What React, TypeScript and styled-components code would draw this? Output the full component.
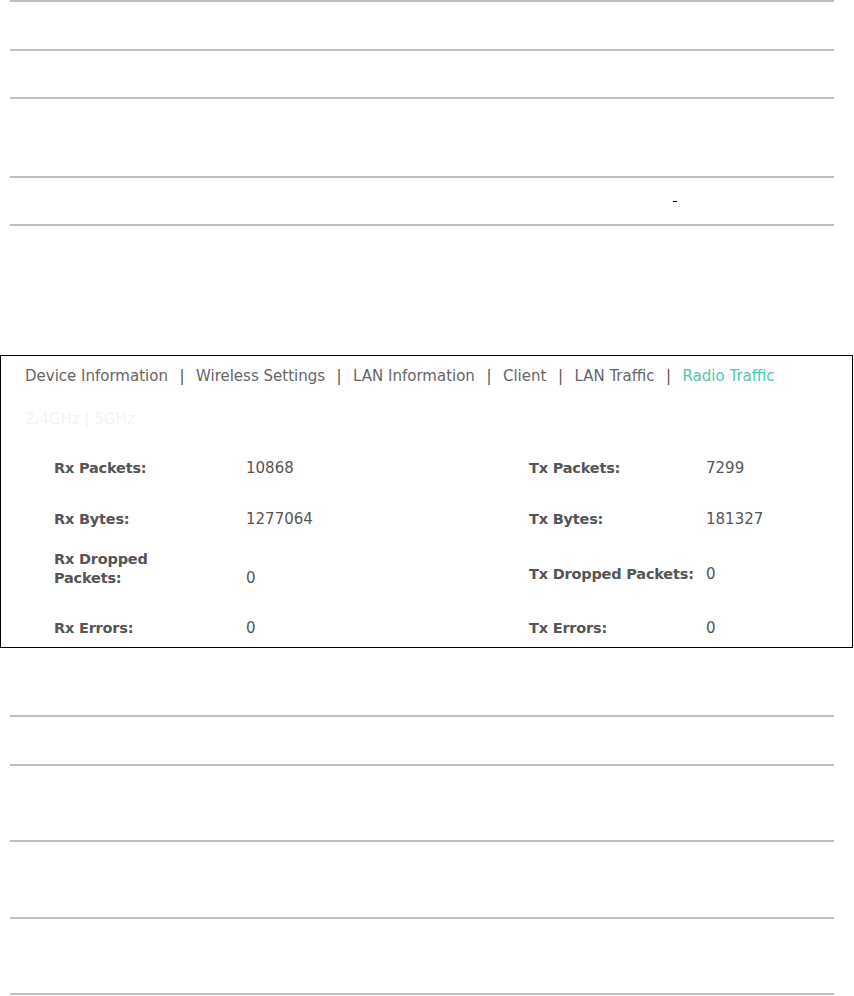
import styled, { createGlobalStyle } from 'styled-components';

const GlobalStyle = createGlobalStyle`
  html, body {
    margin: 0;
    padding: 0;
    background: #ffffff;
  }
  body {
    font-family: 'DejaVu Sans', Verdana, sans-serif;
  }
`;

const Page = styled.div`
  width: 854px;
  display: flex;
  flex-direction: column;
`;

const RuleList = styled.div<{ $top?: number }>`
  margin: ${(p) => p.$top ?? 0}px 20px 0 10px;
  border-top: 2px solid #c0c0c0;
  display: flex;
  flex-direction: column;
`;

const RuleRow = styled.div<{ $h: number }>`
  height: ${(p) => p.$h}px;
  border-bottom: 2px solid #c0c0c0;
  display: flex;
  align-items: center;
`;

const Tick = styled.span`
  display: block;
  width: 4px;
  height: 1px;
  background: #000;
  margin: 0 0 0 663px;
`;

const Panel = styled.section`
  margin-top: 129px;
  width: 851px;
  height: 291px;
  border: 1px solid #000;
  display: flex;
  flex-direction: column;
  font-size: 15px;
  line-height: 19px;
  color: #555;
`;

const Nav = styled.nav`
  display: flex;
  padding: 11px 0 0 24px;
  color: #666;
  white-space: nowrap;
`;

const NavItem = styled.span<{ $active?: boolean }>`
  color: ${(p) => (p.$active ? '#4fc6b1' : '#666')};
`;

const Pipe = styled.span`
  margin: 0 11.5px;
  color: #555;
`;

const BandSwitch = styled.div`
  margin: 24px 0 0 24px;
  color: #f3f3f3;
`;

const StatRow = styled.div<{ $gap: number }>`
  display: flex;
  align-items: flex-end;
  margin-top: ${(p) => p.$gap}px;
  padding-left: 53px;
`;

const Label = styled.div<{ $w: number; $wrap?: number }>`
  width: ${(p) => p.$w}px;
  flex-shrink: 0;
  font-weight: bold;
  font-size: 14.5px;
  letter-spacing: -0.2px;
  padding-right: ${(p) => p.$wrap ?? 0}px;
  box-sizing: border-box;
`;

const Value = styled.div<{ $w?: number }>`
  width: ${(p) => (p.$w ? `${p.$w}px` : 'auto')};
  flex-shrink: 0;
`;

const Pair = styled.div<{ $lift?: number }>`
  display: flex;
  margin-bottom: ${(p) => p.$lift ?? 0}px;
`;

const tabs = [
  'Device Information',
  'Wireless Settings',
  'LAN Information',
  'Client',
  'LAN Traffic',
  'Radio Traffic',
];

const stats = [
  { gap: 30, rl: 'Rx Packets:', rv: '10868', tl: 'Tx Packets:', tv: '7299' },
  { gap: 32, rl: 'Rx Bytes:', rv: '1277064', tl: 'Tx Bytes:', tv: '181327' },
  { gap: 21, rl: 'Rx Dropped Packets:', rv: '0', tl: 'Tx Dropped Packets:', tv: '0', lift: 4 },
  { gap: 31, rl: 'Rx Errors:', rv: '0', tl: 'Tx Errors:', tv: '0' },
];

export default function App() {
  return (
    <Page>
      <GlobalStyle />
      <RuleList>
        <RuleRow $h={47} />
        <RuleRow $h={46} />
        <RuleRow $h={77} />
        <RuleRow $h={46}>
          <Tick />
        </RuleRow>
      </RuleList>

      <Panel>
        <Nav>
          {tabs.map((t, i) => (
            <span key={t}>
              <NavItem $active={i === tabs.length - 1}>{t}</NavItem>
              {i < tabs.length - 1 && <Pipe>|</Pipe>}
            </span>
          ))}
        </Nav>
        <BandSwitch>2.4GHz | 5GHz</BandSwitch>
        {stats.map((s) => (
          <StatRow key={s.rl} $gap={s.gap}>
            <Label $w={192} $wrap={70}>{s.rl}</Label>
            <Value $w={283}>{s.rv}</Value>
            <Pair $lift={s.lift}>
              <Label $w={177}>{s.tl}</Label>
              <Value>{s.tv}</Value>
            </Pair>
          </StatRow>
        ))}
      </Panel>

      <RuleList $top={67}>
        <RuleRow $h={47} />
        <RuleRow $h={74} />
        <RuleRow $h={75} />
        <RuleRow $h={74} />
      </RuleList>
    </Page>
  );
}
